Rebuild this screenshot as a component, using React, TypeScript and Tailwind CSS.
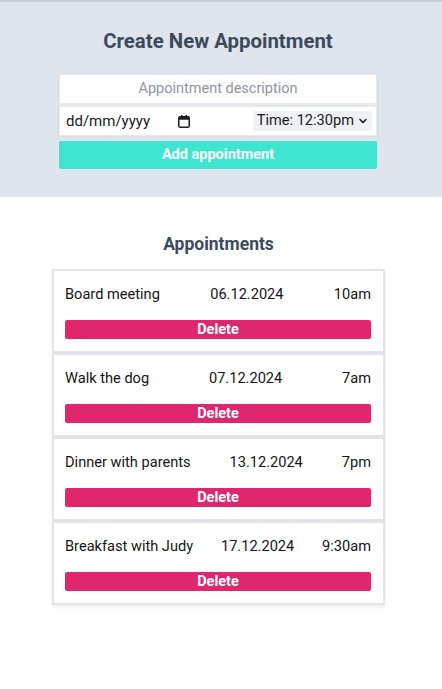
import { ChevronDown } from "lucide-react";

const appointments = [
  { title: "Board meeting", date: "06.12.2024", time: "10am" },
  { title: "Walk the dog", date: "07.12.2024", time: "7am" },
  { title: "Dinner with parents", date: "13.12.2024", time: "7pm" },
  { title: "Breakfast with Judy", date: "17.12.2024", time: "9:30am" },
];

function CalendarGlyph() {
  return (
    <svg width="12" height="13" viewBox="0 0 12 13" className="text-[#1f1f1f]">
      <rect x="0.75" y="1.75" width="10.5" height="10.5" rx="1.5" fill="none" stroke="currentColor" strokeWidth="1.5" />
      <rect x="0.75" y="1.75" width="10.5" height="3" fill="currentColor" />
      <rect x="3" y="0" width="1.5" height="2.5" fill="currentColor" />
      <rect x="7.5" y="0" width="1.5" height="2.5" fill="currentColor" />
    </svg>
  );
}

export default function App() {
  return (
    <div className="min-h-[689px] bg-white font-['Roboto',sans-serif] border-t-2 border-[#c9ccd0]">
      {/* create form */}
      <section className="h-[195px] bg-[#dee5ec]">
        <div className="flex w-[436px] flex-col items-center pt-[27px]">
          <h1 className="text-[20.4px] font-bold leading-6 text-[#3c4a5c]">Create New Appointment</h1>
          <div className="mt-[21px] flex w-[318px] flex-col gap-[4px] bg-[#e6e9ee] p-px shadow-[0_0_2px_rgba(0,0,0,0.08)]">
            <div className="flex h-[28px] items-center justify-center bg-white text-[14.5px] text-[#8e96a3]">
              Appointment description
            </div>
            <div className="flex h-[28px] items-center justify-between bg-white pl-[6px] pr-[4px] text-[15px] text-[#1a1a1a]">
              <div className="flex items-center gap-[28px]">
                <span>dd/mm/yyyy</span>
                <CalendarGlyph />
              </div>
              <div className="flex h-[20px] items-center gap-[3px] bg-[#eef1f6] pl-[4px] pr-[3px] text-[14.6px]">
                <span>Time: 12:30pm</span>
                <ChevronDown className="h-3 w-3" strokeWidth={3} />
              </div>
            </div>
          </div>
          <button className="mt-[5px] h-[28px] w-[318px] rounded-[2px] bg-[#3ee6d1] text-[14.5px] font-bold text-white">
            Add appointment
          </button>
        </div>
      </section>

      {/* list */}
      <section className="flex w-[437px] flex-col items-center pt-[35px]">
        <h2 className="text-[17.5px] font-bold leading-6 text-[#3c4a5c]">Appointments</h2>
        <div className="mt-[13px] flex w-[333px] flex-col">
          {appointments.map((a) => (
            <div
              key={a.title}
              className="flex h-[84px] flex-col border-2 border-[#e3e4ea] bg-white pl-[11px] pr-[12px] pt-[14px] shadow-[0_2px_4px_rgba(0,0,0,0.08)]"
            >
              <div className="flex h-[20px] items-center justify-between text-[14.6px] text-[#151515]">
                <span>{a.title}</span>
                <span>{a.date}</span>
                <span>{a.time}</span>
              </div>
              <button className="mt-[15px] h-[19px] w-full rounded-[2px] bg-[#e0266d] text-[14.5px] font-bold leading-[19px] text-white">
                Delete
              </button>
            </div>
          ))}
        </div>
      </section>
    </div>
  );
}
